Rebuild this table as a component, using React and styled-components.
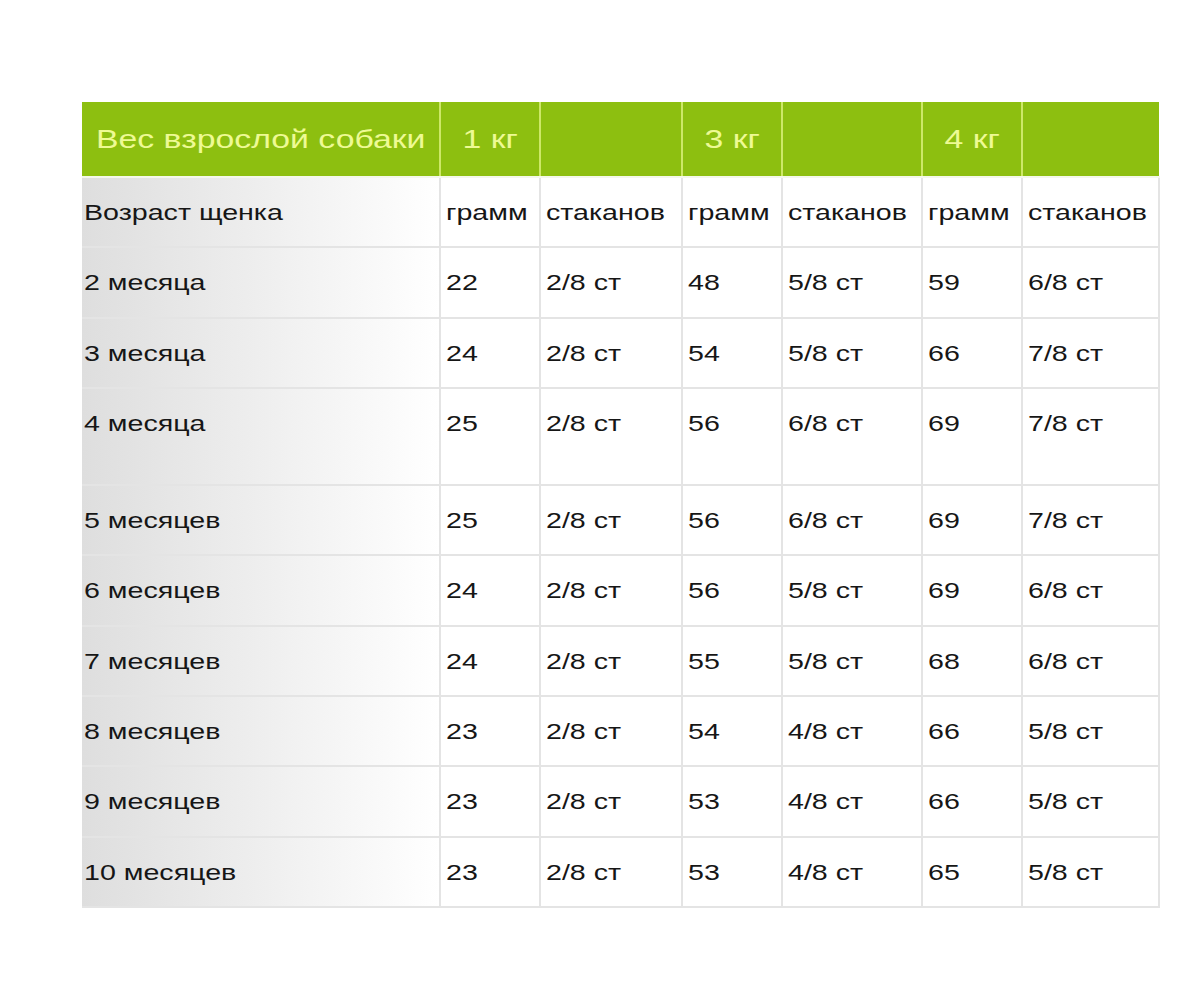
import React from 'react';
import styled, { createGlobalStyle } from 'styled-components';

const GlobalStyle = createGlobalStyle`
  html, body {
    margin: 0;
    padding: 0;
    background: #ffffff;
  }
  body {
    font-family: "Liberation Sans", Arial, sans-serif;
  }
`;

const Page = styled.div`
  padding: 102px 0 60px 82px;
`;

const Table = styled.table`
  width: 1077px;
  table-layout: fixed;
  border-collapse: collapse;
`;

const HeadCell = styled.th`
  height: 74px;
  padding: 0;
  background: #8dbf10;
  color: #eefa94;
  font-size: 26px;
  font-weight: normal;
  text-align: center;
  vertical-align: middle;
  border-left: 2px solid #cde868;
  border-right: 2px solid #cde868;
  border-bottom: 2px solid #f4f8ea;

  &:first-child {
    border-left: none;
  }
  &:last-child {
    border-right: none;
  }
`;

const Cell = styled.td`
  padding: 20px 0 ${(p) => (p.$tall ? 45 : 18)}px ${(p) => (p.$first ? 2 : 5)}px;
  line-height: 30.3px;
  font-size: 22px;
  color: #161616;
  vertical-align: top;
  white-space: nowrap;
  border: 2px solid #e4e4e4;
  background: ${(p) =>
    p.$first ? 'linear-gradient(to right, #dedede 0%, #f0f0f0 55%, #ffffff 100%)' : '#ffffff'};

  &:first-child {
    border-left: none;
  }
`;

/* the screenshot is stretched sideways, so glyphs are widened */
const Label = styled.span`
  display: inline-block;
  transform: scaleX(1.3);
  transform-origin: ${(p) => (p.$center ? 'center' : 'left')} center;
`;

const widths = [358, 100, 142, 100, 140, 100, 137];

const header = ['Вес взрослой собаки', '1 кг', '', '3 кг', '', '4 кг', ''];

const rows = [
  ['Возраст щенка', 'грамм', 'стаканов', 'грамм', 'стаканов', 'грамм', 'стаканов'],
  ['2 месяца', '22', '2/8 ст', '48', '5/8 ст', '59', '6/8 ст'],
  ['3 месяца', '24', '2/8 ст', '54', '5/8 ст', '66', '7/8 ст'],
  ['4 месяца', '25', '2/8 ст', '56', '6/8 ст', '69', '7/8 ст'],
  ['5 месяцев', '25', '2/8 ст', '56', '6/8 ст', '69', '7/8 ст'],
  ['6 месяцев', '24', '2/8 ст', '56', '5/8 ст', '69', '6/8 ст'],
  ['7 месяцев', '24', '2/8 ст', '55', '5/8 ст', '68', '6/8 ст'],
  ['8 месяцев', '23', '2/8 ст', '54', '4/8 ст', '66', '5/8 ст'],
  ['9 месяцев', '23', '2/8 ст', '53', '4/8 ст', '66', '5/8 ст'],
  ['10 месяцев', '23', '2/8 ст', '53', '4/8 ст', '65', '5/8 ст'],
];

export default function App() {
  return (
    <>
      <GlobalStyle />
      <Page>
        <Table>
          <colgroup>
            {widths.map((w, i) => (
              <col key={i} style={{ width: w }} />
            ))}
          </colgroup>
          <thead>
            <tr>
              {header.map((h, i) => (
                <HeadCell key={i}>
                  <Label $center>{h}</Label>
                </HeadCell>
              ))}
            </tr>
          </thead>
          <tbody>
            {rows.map((row, r) => (
              <tr key={r}>
                {row.map((c, i) => (
                  <Cell key={i} $first={i === 0} $tall={row[0] === '4 месяца'}>
                    <Label>{c}</Label>
                  </Cell>
                ))}
              </tr>
            ))}
          </tbody>
        </Table>
      </Page>
    </>
  );
}
